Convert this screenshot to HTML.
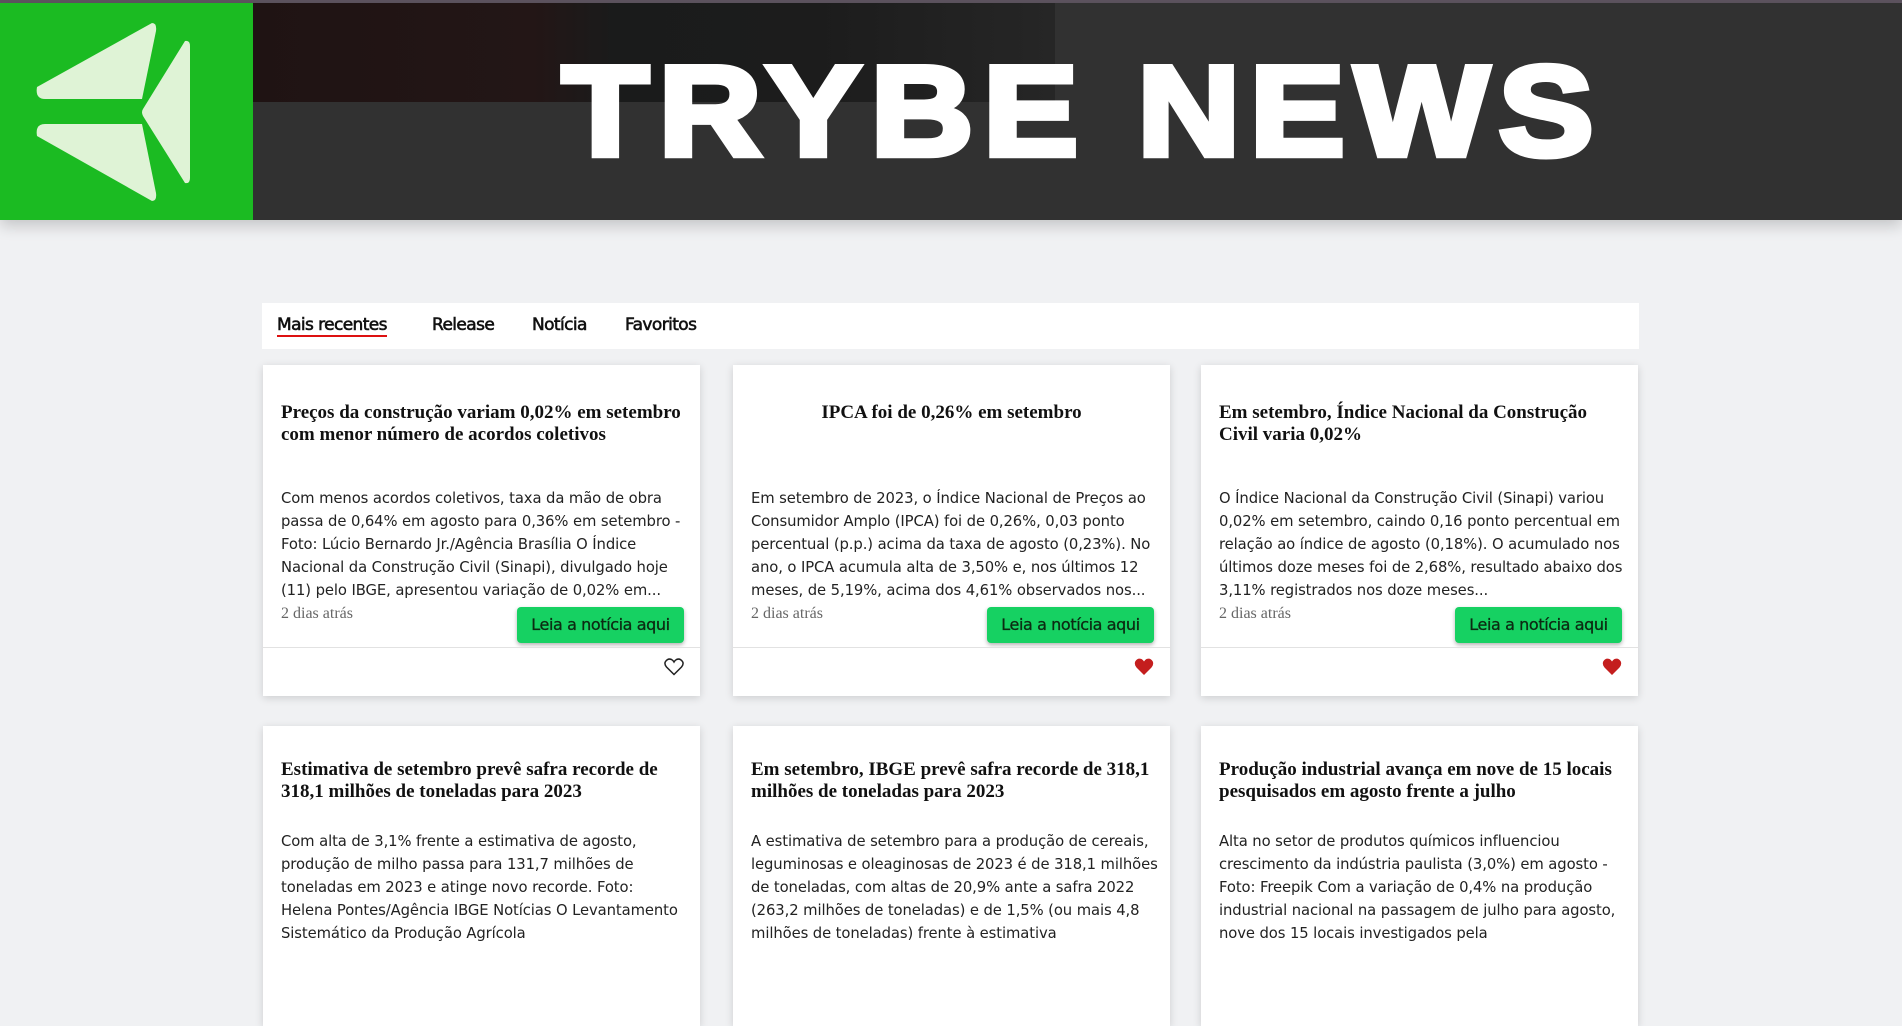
<!DOCTYPE html>
<html><head><meta charset="utf-8"><style>
*{margin:0;padding:0;box-sizing:border-box}
body{width:1902px;height:939px;overflow:hidden;background:#f0f1f3;font-family:"Liberation Sans",sans-serif;position:relative}
.topline{position:absolute;left:0;top:0;width:1902px;height:3px;background:#5e5460}
header{position:absolute;left:0;top:3px;width:1902px;height:217px;background:#313131;box-shadow:0 6px 14px rgba(0,0,0,.18)}
.logo{position:absolute;left:0;top:0;width:253px;height:217px;background:#1bbb22}
.img{position:absolute;left:253px;top:0;width:802px;height:99px;background:linear-gradient(90deg,#1f1313 0%,#231616 35%,#1a1b1b 45%,#1c1c1c 70%,#262626 100%)}
.title{position:absolute;left:562px;top:45px;font-weight:bold;font-size:142px;line-height:142px;color:#fff;letter-spacing:10px;white-space:nowrap;-webkit-text-stroke:7px #fff;transform:scale(1.0,0.9);transform-origin:left top}
nav{position:absolute;left:262px;top:303px;width:1377px;height:46px;background:#fff}
nav span{position:absolute;top:12px;font-family:"DejaVu Sans",sans-serif;font-size:17px;color:#111;letter-spacing:-0.6px;-webkit-text-stroke:0.6px #111}
nav span.a{border-bottom:2px solid #d11;line-height:20px}
.card{position:absolute;width:437px;background:#fff;box-shadow:0 2px 8px rgba(0,0,0,.15)}
.card h2{position:absolute;left:18px;right:18px;font-family:"Liberation Serif",serif;font-weight:bold;font-size:19px;line-height:22px;color:#111}
.card p{position:absolute;left:18px;right:12px;font-family:"DejaVu Sans",sans-serif;font-size:14.8px;line-height:23px;color:#222;letter-spacing:-0.1px}
.date{position:absolute;left:18px;top:240px;font-family:"Liberation Serif",serif;font-size:16px;color:#666}
.btn{position:absolute;right:16px;top:242px;width:167px;height:36px;background:#16d162;border-radius:4px;box-shadow:0 2px 4px rgba(0,0,0,.3);font-family:"DejaVu Sans",sans-serif;font-size:16px;letter-spacing:-0.4px;color:#0c2a12;text-align:center;line-height:36px;-webkit-text-stroke:0.3px #0c2a12}
.hr{position:absolute;left:0;right:0;top:282px;border-top:1px solid #e2e2e2}
.heart{position:absolute;right:16px;top:293px}
</style></head><body>
<div class="topline"></div>
<header>
<div class="logo"><svg width="253" height="217" viewBox="0 0 253 217">
<path d="M152 20 Q157 20 156 28 L142 96 L45 96 Q35 96 37 84 Z" fill="#dff3d6"/>
<path d="M45 121 L142 121 L156 190 Q157 198 152 198 L37 133 Q35 121 45 121 Z" fill="#dff3d6"/>
<path d="M185 38 Q190 37 190 43 L190 175 Q190 181 185 180 L143 113 Q141 109 143 106 Z" fill="#dff3d6"/>
</svg></div>
<div class="img"></div>
<div class="title">TRYBE NEWS</div>
</header>
<nav><span class="a" style="left:15px">Mais recentes</span><span style="left:170px">Release</span><span style="left:270px">Notícia</span><span style="left:363px">Favoritos</span></nav>

<div class="card" style="left:263px;top:365px;height:331px">
<h2 style="top:37px">Preços da construção variam 0,02% em setembro com menor número de acordos coletivos</h2>
<p style="top:122px">Com menos acordos coletivos, taxa da mão de obra passa de 0,64% em agosto para 0,36% em setembro - Foto: Lúcio Bernardo Jr./Agência Brasília O Índice Nacional da Construção Civil (Sinapi), divulgado hoje (11) pelo IBGE, apresentou variação de 0,02% em...</p>
<div class="date">2 dias atrás</div><div class="btn">Leia a notícia aqui</div><div class="hr"></div>
<svg class="heart" width="20" height="18" viewBox="0 0 20 18"><path d="M10 16.5 L2.5 9 Q0 6 1.5 3.5 Q4 0 7.5 1.5 Q9 2.3 10 4 Q11 2.3 12.5 1.5 Q16 0 18.5 3.5 Q20 6 17.5 9 Z" fill="none" stroke="#222" stroke-width="1.5"/></svg>
</div>
<div class="card" style="left:733px;top:365px;height:331px">
<h2 style="top:37px;text-align:center">IPCA foi de 0,26% em setembro</h2>
<p style="top:122px">Em setembro de 2023, o Índice Nacional de Preços ao Consumidor Amplo (IPCA) foi de 0,26%, 0,03 ponto percentual (p.p.) acima da taxa de agosto (0,23%). No ano, o IPCA acumula alta de 3,50% e, nos últimos 12 meses, de 5,19%, acima dos 4,61% observados nos...</p>
<div class="date">2 dias atrás</div><div class="btn">Leia a notícia aqui</div><div class="hr"></div>
<svg class="heart" width="20" height="18" viewBox="0 0 20 18"><path d="M10 17 L2.5 9.5 Q0 6.5 1.2 3.5 Q3.5 -0.5 7.5 1 Q9 1.8 10 3.5 Q11 1.8 12.5 1 Q16.5 -0.5 18.8 3.5 Q20 6.5 17.5 9.5 Z" fill="#c41e1e"/></svg>
</div>
<div class="card" style="left:1201px;top:365px;height:331px">
<h2 style="top:37px">Em setembro, Índice Nacional da Construção Civil varia 0,02%</h2>
<p style="top:122px">O Índice Nacional da Construção Civil (Sinapi) variou 0,02% em setembro, caindo 0,16 ponto percentual em relação ao índice de agosto (0,18%). O acumulado nos últimos doze meses foi de 2,68%, resultado abaixo dos 3,11% registrados nos doze meses...</p>
<div class="date">2 dias atrás</div><div class="btn">Leia a notícia aqui</div><div class="hr"></div>
<svg class="heart" width="20" height="18" viewBox="0 0 20 18"><path d="M10 17 L2.5 9.5 Q0 6.5 1.2 3.5 Q3.5 -0.5 7.5 1 Q9 1.8 10 3.5 Q11 1.8 12.5 1 Q16.5 -0.5 18.8 3.5 Q20 6.5 17.5 9.5 Z" fill="#c41e1e"/></svg>
</div>

<div class="card" style="left:263px;top:726px;height:300px">
<h2 style="top:33px">Estimativa de setembro prevê safra recorde de 318,1 milhões de toneladas para 2023</h2>
<p style="top:104px">Com alta de 3,1% frente a estimativa de agosto, produção de milho passa para 131,7 milhões de toneladas em 2023 e atinge novo recorde. Foto: Helena Pontes/Agência IBGE Notícias O Levantamento Sistemático da Produção Agrícola</p>
</div>
<div class="card" style="left:733px;top:726px;height:300px">
<h2 style="top:33px">Em setembro, IBGE prevê safra recorde de 318,1 milhões de toneladas para 2023</h2>
<p style="top:104px">A estimativa de setembro para a produção de cereais, leguminosas e oleaginosas de 2023 é de 318,1 milhões de toneladas, com altas de 20,9% ante a safra 2022 (263,2 milhões de toneladas) e de 1,5% (ou mais 4,8 milhões de toneladas) frente à estimativa</p>
</div>
<div class="card" style="left:1201px;top:726px;height:300px">
<h2 style="top:33px">Produção industrial avança em nove de 15 locais pesquisados em agosto frente a julho</h2>
<p style="top:104px">Alta no setor de produtos químicos influenciou crescimento da indústria paulista (3,0%) em agosto - Foto: Freepik Com a variação de 0,4% na produção industrial nacional na passagem de julho para agosto, nove dos 15 locais investigados pela</p>
</div>
</body></html>
